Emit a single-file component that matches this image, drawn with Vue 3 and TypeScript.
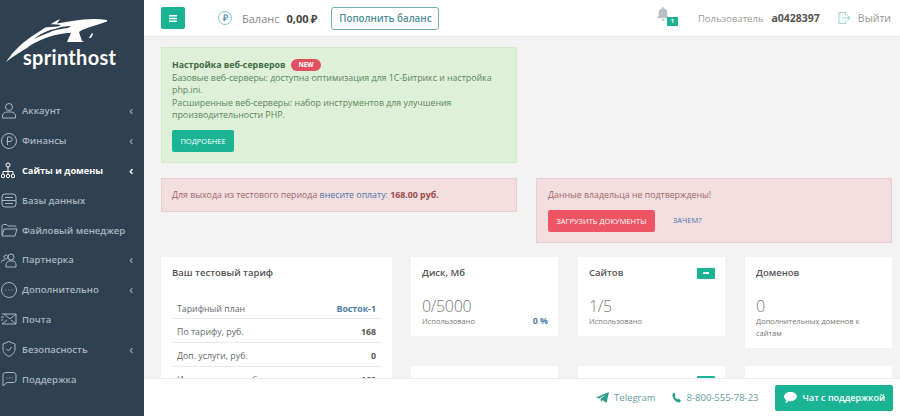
<script setup lang="ts">
const menu = [
  { label: 'Аккаунт', icon: 'user', arrow: true },
  { label: 'Финансы', icon: 'ruble', arrow: true },
  { label: 'Сайты и домены', icon: 'sites', arrow: true, active: true },
  { label: 'Базы данных', icon: 'db', arrow: false },
  { label: 'Файловый менеджер', icon: 'folder', arrow: false },
  { label: 'Партнерка', icon: 'partners', arrow: true },
  { label: 'Дополнительно', icon: 'more', arrow: true },
  { label: 'Почта', icon: 'mail', arrow: false },
  { label: 'Безопасность', icon: 'shield', arrow: true },
  { label: 'Поддержка', icon: 'chat', arrow: false },
]

const tariffRows = [
  { name: 'Тарифный план', value: 'Восток-1', link: true },
  { name: 'По тарифу, руб.', value: '168' },
  { name: 'Доп. услуги, руб.', value: '0' },
  { name: 'Итого в месяц, руб.', value: '168' },
]
</script>

<template>
  <div class="page">
    <aside class="sidebar">
      <div class="logo">
        <svg class="logo-mark" width="120" height="70" viewBox="0 0 120 70">
          <path fill="#fff" d="M6 62C14 50 24 41 37 33C43 29 52 23 60 19L57 23.500C62 22.500 67 22 72 21C84 19 96 18 107 20L107 21.500C100 24 94 26 90 27L82 30L79 32L82 41L84 42L67 42L71 33L67 33C58 34 50 36 43 39C36 42 30 45 27 48C20 52 12 57 6 62Z" />
          <path fill="#2f4050" d="M34 39C40 34 48 30 55 29C60 27 66 26 71 26L68 28C60 29 54 30 48 33C43 35 38 37 34 39ZM46 25C50 24 56 24 61 25L58 26.500L43 27.500Z" />
          <path fill="#fff" d="M92 33L93 34L91 38L89 38Z" />
        </svg>
        <div class="logo-name">sprinthost</div>
      </div>
      <nav class="menu">
        <div v-for="item in menu" :key="item.label" class="menu-item" :class="{ active: item.active }">
          <svg class="menu-icon" width="18" height="18" viewBox="0 0 18 18" fill="none" stroke="currentColor" stroke-width="1">
            <template v-if="item.icon === 'user'">
              <path d="M4.500 5a3.500 3.500 0 1 1 7 0a3.500 3.500 0 0 1-7 0Z" />
              <path d="M1.500 16v-2c0-2 2-4 4-4h5c2 0 4 2 4 4v2Z" />
            </template>
            <template v-else-if="item.icon === 'ruble'">
              <circle cx="8" cy="9" r="7.500" />
              <path d="M6.500 13V5h2.500a2 2 0 0 1 0 4.500H5.500" />
            </template>
            <template v-else-if="item.icon === 'sites'">
              <circle cx="7" cy="4" r="2" />
              <path d="M7 6v4M2 13v-2.500h10V13M7 10.500V13" />
              <circle cx="2" cy="15" r="1.700" />
              <circle cx="7" cy="15" r="1.700" />
              <circle cx="12" cy="15" r="1.700" />
            </template>
            <template v-else-if="item.icon === 'db'">
              <rect x="1" y="3" width="14" height="13" rx="3" />
              <path d="M1 9.500h14M4 6.500h8M4 12.500h8" />
            </template>
            <template v-else-if="item.icon === 'folder'">
              <path d="M1 14V5c0-1 .5-1.500 1.500-1.500h3L7 5h7c1 0 1 .5 1 1.500" />
              <path d="M1 15l2-7h13l-2 7Z" />
            </template>
            <template v-else-if="item.icon === 'partners'">
              <circle cx="10" cy="6" r="3" />
              <path d="M5 16v-2c0-2 2-4 3-4h4c2 0 3 2 3 4v2Z" />
              <path d="M3 6a2 2 0 1 1 0 .1M0 12c0-2 1-3 4-3" />
            </template>
            <template v-else-if="item.icon === 'more'">
              <circle cx="8" cy="9" r="7.500" />
              <path d="M4.500 9h1M7.500 9h1M10.500 9h1" />
            </template>
            <template v-else-if="item.icon === 'mail'">
              <path d="M1 4h14v10H1M3 4l6 5l6-5M1 14l5-4M15 14l-5-4M0 7h3M0 10h2" />
            </template>
            <template v-else-if="item.icon === 'shield'">
              <path d="M8 1.500l6 2.500v5c0 4-3 6-6 7.500c-3-1.500-6-3.500-6-7.500V4Z" />
              <path d="M5.500 9l2 2l3-4" />
            </template>
            <template v-else>
              <path d="M2 14V5c0-1.500 1-2.500 3-2.500h7c2 0 3 1 3 2.500v5c0 1.500-1 2.500-3 2.500H6L2 16Z" />
              <path d="M5.500 8h1M8 8h1M10.500 8h1" />
            </template>
          </svg>
          <span class="menu-label">{{ item.label }}</span>
          <span v-if="item.arrow" class="menu-arrow">‹</span>
        </div>
      </nav>
    </aside>

    <div class="main">
      <header class="topbar">
        <button class="burger">
          <svg width="8" height="7" viewBox="0 0 8 7" fill="#fff"><path d="M0 0h8v1.500H0zM0 2.750h8v1.500H0zM0 5.500h8V7H0z" /></svg>
        </button>
        <span class="coin">₽</span>
        <span class="balance-label">Баланс</span>
        <b class="balance-value">0,00 ₽</b>
        <button class="topup">Пополнить баланс</button>
        <div class="topbar-right">
          <span class="bell">
            <svg width="12" height="14" viewBox="0 0 14 16" fill="#b9bec3"><path d="M6 0h2v1.500c2.500.5 4 2.500 4 5v3.500l2 3H0l2-3V6.500c0-2.500 1.500-4.500 4-5ZM5 14h4a2 2 0 0 1-4 0Z" /></svg>
            <span class="bell-count">1</span>
          </span>
          <span class="user-label">Пользователь</span>
          <b class="user-name">a0428397</b>
          <svg class="logout-icon" width="13" height="14" viewBox="0 0 14 14" fill="none" stroke="#8fd0c4" stroke-width="1"><path d="M8 4V1H1v12h7v-3M5 7h8M10 4l3 3l-3 3" /></svg>
          <span class="logout">Выйти</span>
        </div>
      </header>

      <div class="content">
        <div class="alerts">
          <div class="alert-col">
            <div class="alert green">
              <div><b>Настройка веб-серверов</b><span class="new">NEW</span></div>
              <p>Базовые веб-серверы: доступна оптимизация для 1С-Битрикс и настройка php.ini.</p>
              <p>Расширенные веб-серверы: набор инструментов для улучшения производительности PHP.</p>
              <button class="btn btn-green">ПОДРОБНЕЕ</button>
            </div>
            <div class="alert red">
              Для выхода из тестового периода <a>внесите оплату</a>: <b>168.00 руб.</b>
            </div>
          </div>
          <div class="alert-col alert-col-right">
            <div class="alert red owner">
              <div>Данные владельца не подтверждены!</div>
              <div class="owner-actions">
                <button class="btn btn-red">ЗАГРУЗИТЬ ДОКУМЕНТЫ</button>
                <a class="why">ЗАЧЕМ?</a>
              </div>
            </div>
          </div>
        </div>

        <div class="cards">
          <section class="card tariff">
            <h3>Ваш тестовый тариф</h3>
            <div v-for="row in tariffRows" :key="row.name" class="tariff-row">
              <span>{{ row.name }}</span>
              <b :class="{ link: row.link }">{{ row.value }}</b>
            </div>
          </section>
          <div class="stats">
            <section class="card stat">
              <h3>Диск, Мб</h3>
              <div class="stat-num">0/5000</div>
              <div class="stat-foot"><small>Использовано</small><b class="link">0 %</b></div>
            </section>
            <section class="card stat">
              <h3>Сайтов<span class="mini-btn"></span></h3>
              <div class="stat-num">1/5</div>
              <small>Использовано</small>
            </section>
            <section class="card stat">
              <h3>Доменов</h3>
              <div class="stat-num">0</div>
              <small>Дополнительных доменов к сайтам</small>
            </section>
            <section class="card stat"></section>
            <section class="card stat"><span class="mini-btn mini-low"></span></section>
            <section class="card stat"></section>
          </div>
        </div>
      </div>

      <footer class="footer">
        <a class="foot-link">
          <svg width="13" height="11" viewBox="0 0 13 11" fill="#2a9d8f"><path d="M0 5.500L13 0L10.500 11L6.500 8L5 10L4.500 7L10 2.500L3 6.500Z" /></svg>
          Telegram
        </a>
        <a class="foot-link phone">
          <svg width="9" height="11" viewBox="0 0 10 11" fill="#2a9d8f"><path d="M2.500 0L4 3L3 4.500C3.500 6 4.500 7 6 7.500L7.500 6.800L10 9L8.500 11C4 11 0 6 .5 1.500Z" /></svg>
          8-800-555-78-23
        </a>
        <button class="chat">
          <svg width="13" height="11" viewBox="0 0 14 12" fill="#fff"><path d="M7 0c4 0 7 2.200 7 5s-3 5-7 5c-.7 0-1.300 0-2-.2C4 11 2.500 11.700 1 12c.8-.8 1.300-1.700 1.400-3C1 8 0 6.600 0 5c0-2.800 3-5 7-5Z" /></svg>
          Чат с поддержкой
        </button>
      </footer>
    </div>
  </div>
</template>

<style scoped>
.page {
  display: flex;
  width: 900px;
  height: 416px;
  overflow: hidden;
  font-family: "Open Sans", sans-serif;
  font-size: 8.800px;
  color: #676a6c;
}

.sidebar {
  flex: none;
  width: 144px;
  background: #2f4050;
  color: #a7b1c2;
}

.logo {
  position: relative;
  height: 96px;
}

.logo-mark {
  position: absolute;
  left: 0;
  top: 0;
}

.logo-name {
  position: absolute;
  left: 23px;
  top: 45px;
  font-family: "Lato", sans-serif;
  font-size: 20px;
  line-height: 24px;
  font-weight: 700;
  letter-spacing: 0.3px;
  color: #fff;
}

.menu-item {
  display: flex;
  align-items: center;
  height: 29.800px;
  padding-left: 1px;
  font-size: 9.500px;
  font-weight: 600;
  color: #a9b6c2;
}

.menu-item.active {
  color: #fff;
  font-weight: 700;
  font-size: 9.200px;
}

.menu-icon {
  flex: none;
  margin-right: 3px;
}

.menu-label {
  flex: 1;
  white-space: nowrap;
}

.menu-arrow {
  width: 15px;
  font-size: 13px;
  line-height: 13px;
  font-weight: 600;
  color: #8a9aa8;
}

.active .menu-arrow {
  color: #fff;
}

.main {
  position: relative;
  flex: 1;
  min-width: 0;
  background: #f3f3f4;
}

.topbar {
  display: flex;
  align-items: center;
  height: 37px;
  padding-left: 17px;
  background: #fff;
  border-bottom: 1px solid #e7eaec;
  box-sizing: border-box;
}

.burger {
  display: flex;
  align-items: center;
  justify-content: center;
  width: 24px;
  height: 22px;
  padding: 0;
  border: 0;
  border-radius: 2px;
  background: #1ab394;
}

.coin {
  box-sizing: border-box;
  width: 14px;
  height: 14px;
  margin-left: 33px;
  border: 1px solid #7fc7cf;
  border-radius: 50%;
  font-size: 9px;
  font-weight: 700;
  line-height: 12px;
  text-align: center;
  color: #5b9aa5;
}

.balance-label {
  margin-left: 10px;
  font-size: 11px;
  color: #888;
}

.balance-value {
  margin-left: 7px;
  font-size: 11px;
  color: #444;
}

.topup {
  height: 23px;
  width: 108px;
  margin-left: 14px;
  padding: 0;
  border: 1px solid #6fb0b5;
  border-radius: 3px;
  background: #fff;
  font-family: inherit;
  font-size: 9.800px;
  font-weight: 600;
  color: #4f8f98;
}

.topbar-right {
  display: flex;
  align-items: center;
  margin-left: auto;
  padding-right: 9px;
}

.bell {
  position: relative;
  display: flex;
  margin-right: 29px;
  margin-bottom: 9px;
}

.bell-count {
  position: absolute;
  left: 10px;
  top: 10px;
  width: 11px;
  height: 9px;
  background: #1ab394;
  color: #fff;
  font-size: 6px;
  font-weight: 700;
  line-height: 9px;
  text-align: center;
}

.user-label {
  font-size: 9.500px;
  color: #999;
}

.user-name {
  margin-left: 8px;
  font-size: 10.500px;
  color: #555;
}

.logout-icon {
  margin-left: 18px;
}

.logout {
  margin-left: 7px;
  font-size: 10.500px;
  color: #999;
}

.content {
  padding: 10px 8px 0 17px;
}

.alerts {
  display: flex;
  gap: 19px;
}

.alert-col {
  flex: 1;
  min-width: 0;
  display: flex;
  flex-direction: column;
  gap: 15px;
}

.alert-col-right {
  padding-top: 131px;
}

.alert {
  box-sizing: border-box;
  padding: 0 10px;
  border: 1px solid transparent;
  line-height: 12.500px;
}

.alert p {
  margin: 0;
}

.green {
  height: 116px;
  padding-top: 11px;
  background: #dff0d8;
  border-color: #d6e9c6;
  color: #5c8560;
}

.green b {
  color: #3f6b45;
}

.new {
  display: inline-block;
  margin-left: 6px;
  padding: 0 7px;
  border-radius: 7px;
  background: #e0505f;
  color: #fff;
  font-size: 6.500px;
  font-weight: 700;
  line-height: 12px;
  vertical-align: 1px;
}

.red {
  background: #f2dede;
  border-color: #ebccd1;
  color: #a0686c;
}

.alert-col > .red:not(.owner) {
  height: 34px;
  padding-top: 10px;
}

.red a {
  color: #4e74ab;
}

.red b {
  color: #9c4a4c;
}

.owner {
  height: 65px;
  padding: 10px 10px 0 11px;
}

.owner-actions {
  display: flex;
  align-items: center;
  margin-top: 8px;
}

.why {
  margin-left: 18px;
  font-size: 7.500px;
}

.btn {
  height: 22px;
  padding: 0;
  border: 0;
  border-radius: 2px;
  color: #fff;
  font-family: inherit;
  font-size: 7.500px;
  font-weight: 400;
}

.btn-green {
  display: block;
  width: 62px;
  margin-top: 8px;
  background: #1ab394;
}

.btn-red {
  width: 107px;
  background: #ed5565;
}

.cards {
  display: flex;
  gap: 19px;
  margin-top: 14px;
}

.card {
  box-sizing: border-box;
  background: #fff;
}

.card h3 {
  display: flex;
  justify-content: space-between;
  align-items: center;
  margin: 0;
  font-size: 9.500px;
  font-weight: 600;
  line-height: 14px;
  color: #555;
}

.tariff {
  flex: none;
  width: 231px;
  height: 200px;
  padding: 9px 11px;
}

.tariff h3 {
  margin-bottom: 17px;
}

.tariff-row {
  display: flex;
  justify-content: space-between;
  align-items: center;
  box-sizing: border-box;
  height: 24px;
  padding: 2px 5px 0;
  border-bottom: 1px solid #e7eaec;
}

.tariff-row:first-of-type {
  height: 22px;
}

.tariff-row b {
  color: #555;
}

.stats {
  flex: 1;
  display: grid;
  grid-template-columns: repeat(3, 147px);
  grid-auto-rows: min-content;
  column-gap: 20px;
  row-gap: 18px;
  align-items: start;
}

.stat {
  position: relative;
  min-height: 79px;
  padding: 9px 10px 9px 11px;
}

.stat-num {
  margin-top: 17px;
  font-size: 16px;
  font-weight: 300;
  line-height: 18px;
  letter-spacing: -0.3px;
  color: #777;
}

.stat small {
  display: block;
  font-size: 7.500px;
  line-height: 12px;
  color: #777;
}

.stat-foot {
  display: flex;
  justify-content: space-between;
  align-items: center;
}

.link {
  color: #4d7ea8 !important;
}

.mini-btn {
  display: block;
  position: relative;
  width: 18px;
  height: 11px;
  border-radius: 1px;
  background: #1ab394;
}

.mini-btn::after {
  content: "";
  position: absolute;
  left: 6px;
  top: 4px;
  width: 6px;
  height: 2px;
  background: #fff;
}

.mini-low {
  position: absolute;
  right: 10px;
  top: 10px;
}

.footer {
  position: absolute;
  left: 0;
  right: 0;
  bottom: 0;
  display: flex;
  align-items: center;
  justify-content: flex-end;
  height: 38px;
  padding-right: 7px;
  box-sizing: border-box;
  background: #fff;
  border-top: 1px solid #e7eaec;
}

.foot-link {
  display: flex;
  align-items: center;
  gap: 5px;
  margin-right: 16px;
  font-size: 9.500px;
  color: #5f9ea0;
}

.phone {
  gap: 6px;
  margin-right: 16px;
}

.chat {
  display: flex;
  align-items: center;
  gap: 6px;
  height: 26px;
  padding: 0 8px 0 9px;
  border: 0;
  border-radius: 2px;
  background: #1ab394;
  color: #fff;
  font-family: inherit;
  font-size: 9px;
  font-weight: 600;
}
</style>
